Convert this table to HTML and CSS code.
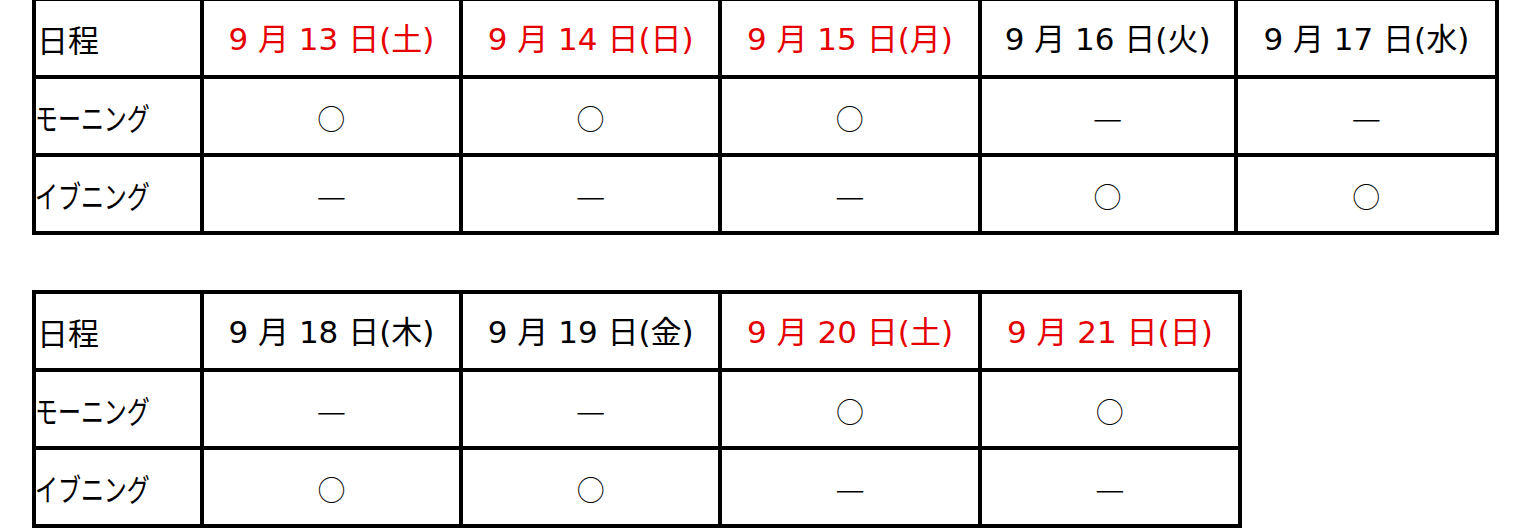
FILE: index.html
```html
<!DOCTYPE html>
<html lang="ja">
<head>
<meta charset="utf-8">
<link rel="stylesheet" href="styles.css">
</head>
<body>
<table class="sched first">
  <tr>
    <td class="label"><span class="jp">日程</span></td>
    <td class="red">9 月 13 日(土)</td>
    <td class="red">9 月 14 日(日)</td>
    <td class="red">9 月 15 日(月)</td>
    <td>9 月 16 日(火)</td>
    <td>9 月 17 日(水)</td>
  </tr>
  <tr>
    <td class="label"><span class="kana">モーニング</span></td>
    <td class="mark">○</td>
    <td class="mark">○</td>
    <td class="mark">○</td>
    <td class="mark dash">—</td>
    <td class="mark dash">—</td>
  </tr>
  <tr>
    <td class="label"><span class="kana">イブニング</span></td>
    <td class="mark dash">—</td>
    <td class="mark dash">—</td>
    <td class="mark dash">—</td>
    <td class="mark">○</td>
    <td class="mark">○</td>
  </tr>
</table>

<table class="sched second">
  <tr>
    <td class="label"><span class="jp">日程</span></td>
    <td>9 月 18 日(木)</td>
    <td>9 月 19 日(金)</td>
    <td class="red">9 月 20 日(土)</td>
    <td class="red">9 月 21 日(日)</td>
  </tr>
  <tr>
    <td class="label"><span class="kana">モーニング</span></td>
    <td class="mark dash">—</td>
    <td class="mark dash">—</td>
    <td class="mark">○</td>
    <td class="mark">○</td>
  </tr>
  <tr>
    <td class="label"><span class="kana">イブニング</span></td>
    <td class="mark">○</td>
    <td class="mark">○</td>
    <td class="mark dash">—</td>
    <td class="mark dash">—</td>
  </tr>
</table>
</body>
</html>
```

FILE: styles.css
```css
html, body {
  margin: 0;
  padding: 0;
  background: #ffffff;
}

body {
  padding-left: 32px;
  font-family: "DejaVu Sans", "Noto Sans CJK JP", sans-serif;
  font-size: 31px;
  color: #000000;
}

.sched {
  border-collapse: separate;
  border-spacing: 0;
  table-layout: fixed;
  border-left: 4px solid #000;
  border-top: 4px solid #000;
}

.first {
  margin-top: -3px;
  width: 1467px;
}

.second {
  margin-top: 55px;
  width: 1210px;
}

.sched td {
  border-right: 4px solid #000;
  border-bottom: 4px solid #000;
  height: 74px;
  padding: 0;
  padding-top: 3px;
  box-sizing: border-box;
  text-align: center;
  vertical-align: middle;
  white-space: nowrap;
  line-height: 1;
}

.sched tr {
  height: 78px;
}

.sched td.label {
  width: 165px;
  text-align: left;
}

.sched td:nth-child(2),
.sched td:nth-child(3),
.sched td:nth-child(4) {
  width: 255px;
}

.first td:nth-child(5) { width: 252px; }
.first td:nth-child(6) { width: 257px; }
.second td:nth-child(5) { width: 256px; }

.red { color: #e60000; }

.jp {
  font-family: "Noto Sans CJK JP", sans-serif;
  padding-left: 1px;
}

.kana {
  display: inline-block;
  font-family: "Noto Sans CJK JP", sans-serif;
  transform: scaleX(0.74);
  transform-origin: left center;
  margin-left: -1px;
}

.mark {
  font-family: "Noto Sans CJK JP", sans-serif;
  font-weight: 300;
  font-size: 28px;
}

.mark.dash {
  font-size: 33px;
  font-weight: 300;
  padding-top: 0;
}
```
